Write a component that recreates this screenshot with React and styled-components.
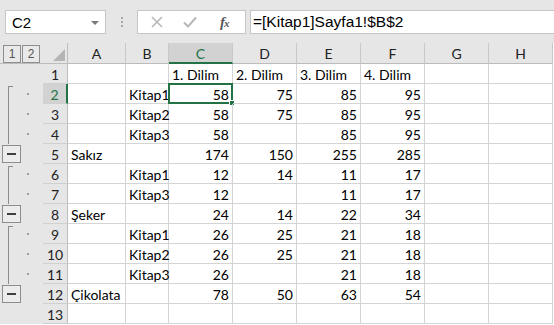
import React from "react";
import styled, { createGlobalStyle, css } from "styled-components";

const GlobalStyle = createGlobalStyle`
  html, body {
    margin: 0;
    padding: 0;
    background: #ffffff;
  }
  * {
    box-sizing: border-box;
  }
`;

const GREEN = "#217346";
const GRID = "#d4d4d4";
const HEAD_BG = "#e6e6e6";
const HEAD_SEL = "#d2d2d2";

const columns = ["A", "B", "C", "D", "E", "F", "G", "H"];

const rows = [
  { n: 1, outline: "none", C: "1. Dilim", D: "2. Dilim", E: "3. Dilim", F: "4. Dilim" },
  { n: 2, outline: "start", B: "Kitap1", C: 58, D: 75, E: 85, F: 95 },
  { n: 3, outline: "line", B: "Kitap2", C: 58, D: 75, E: 85, F: 95 },
  { n: 4, outline: "line", B: "Kitap3", C: 58, E: 85, F: 95 },
  { n: 5, outline: "button", A: "Sakız", C: 174, D: 150, E: 255, F: 285 },
  { n: 6, outline: "start", B: "Kitap1", C: 12, D: 14, E: 11, F: 17 },
  { n: 7, outline: "line", B: "Kitap3", C: 12, E: 11, F: 17 },
  { n: 8, outline: "button", A: "Şeker", C: 24, D: 14, E: 22, F: 34 },
  { n: 9, outline: "start", B: "Kitap1", C: 26, D: 25, E: 21, F: 18 },
  { n: 10, outline: "line", B: "Kitap2", C: 26, D: 25, E: 21, F: 18 },
  { n: 11, outline: "line", B: "Kitap3", C: 26, E: 21, F: 18 },
  { n: 12, outline: "button", A: "Çikolata", C: 78, D: 50, E: 63, F: 54 },
  { n: 13, outline: "none" },
];

function App() {
  return (
    <>
      <GlobalStyle />
      <Window>
        <TopBar>
          <NameBox>
            <NameText>C2</NameText>
            <DropArrow />
          </NameBox>
          <Grip>
            <GripDot />
            <GripDot />
            <GripDot />
          </Grip>
          <FormulaButtons>
            <IconSlot>
              <svg width="14" height="14" viewBox="0 0 14 14">
                <path d="M2 2 L12 12 M12 2 L2 12" stroke="#b8b8b8" strokeWidth="1.6" fill="none" />
              </svg>
            </IconSlot>
            <IconSlot>
              <svg width="16" height="14" viewBox="0 0 16 14">
                <path d="M2 7.5 L6 11.5 L14 2.5" stroke="#b8b8b8" strokeWidth="2" fill="none" />
              </svg>
            </IconSlot>
            <IconSlot>
              <Fx>
                f<FxSub>x</FxSub>
              </Fx>
            </IconSlot>
          </FormulaButtons>
          <FormulaInput>=[Kitap1]Sayfa1!$B$2</FormulaInput>
        </TopBar>

        <Sheet>
          <Gutter $header>
            <LevelButton>1</LevelButton>
            <LevelButton>2</LevelButton>
          </Gutter>
          <Corner>
            <svg width="12" height="12" viewBox="0 0 12 12">
              <polygon points="12,0 12,12 0,12" fill="#b5b5b5" />
            </svg>
          </Corner>
          {columns.map((c) => (
            <ColHead key={c} $selected={c === "C"}>
              {c}
            </ColHead>
          ))}

          {rows.map((r) => (
            <React.Fragment key={r.n}>
              <Gutter $kind={r.outline}>
                {(r.outline === "start" || r.outline === "line") && <OutlineDot />}
                {r.outline === "button" && (
                  <MinusButton>
                    <MinusBar />
                  </MinusButton>
                )}
              </Gutter>
              <RowHead $selected={r.n === 2}>{r.n}</RowHead>
              {columns.map((c) => {
                const v = r[c];
                const isNum = typeof v === "number";
                const active = r.n === 2 && c === "C";
                return (
                  <Cell key={c} $num={isNum}>
                    {v}
                    {active && (
                      <ActiveFrame>
                        <FillHandle />
                      </ActiveFrame>
                    )}
                  </Cell>
                );
              })}
            </React.Fragment>
          ))}
        </Sheet>
      </Window>
    </>
  );
}

export default App;

const Window = styled.div`
  width: 554px;
  height: 325px;
  overflow: hidden;
  display: flex;
  flex-direction: column;
  background: #ffffff;
`;

const TopBar = styled.div`
  height: 43px;
  flex-shrink: 0;
  display: flex;
  align-items: flex-start;
  padding: 10px 0 0 5px;
  background: ${HEAD_BG};
`;

const NameBox = styled.div`
  width: 101px;
  height: 24px;
  background: #ffffff;
  border: 1px solid #c6c6c6;
  display: flex;
  align-items: center;
  justify-content: space-between;
  padding: 0 6px 0 6px;
`;

const NameText = styled.span`
  font-family: "Liberation Sans", Arial, sans-serif;
  font-size: 15px;
  color: #000;
`;

const DropArrow = styled.span`
  width: 0;
  height: 0;
  border-left: 4px solid transparent;
  border-right: 4px solid transparent;
  border-top: 4px solid #7a7a7a;
  margin-top: 1px;
`;

const Grip = styled.div`
  width: 31px;
  height: 24px;
  display: flex;
  flex-direction: column;
  align-items: center;
  justify-content: center;
  gap: 2px;
`;

const GripDot = styled.span`
  width: 2px;
  height: 2px;
  background: #a8a8a8;
`;

const FormulaButtons = styled.div`
  width: 109px;
  height: 24px;
  background: #ffffff;
  border: 1px solid #c6c6c6;
  display: grid;
  grid-template-columns: 1fr 1fr 1fr;
  align-items: center;
  justify-items: center;
  padding: 0 4px 0 2px;
`;

const IconSlot = styled.span`
  display: flex;
  align-items: center;
  justify-content: center;
`;

const Fx = styled.span`
  font-family: "Liberation Serif", "Times New Roman", serif;
  font-style: italic;
  font-size: 15px;
  color: #595959;
  font-weight: bold;
  letter-spacing: -1px;
`;

const FxSub = styled.span`
  font-size: 11px;
`;

const FormulaInput = styled.div`
  flex: 1;
  height: 24px;
  margin-left: 4px;
  background: #ffffff;
  border: 1px solid #c6c6c6;
  border-right: none;
  font-family: "Liberation Sans", Arial, sans-serif;
  font-size: 15.5px;
  line-height: 22px;
  padding-left: 2px;
  color: #000;
  white-space: nowrap;
`;

const Sheet = styled.div`
  display: grid;
  grid-template-columns: 43px 25px 58px 43px repeat(6, 64px);
  grid-template-rows: 21px repeat(13, 20px);
  font-family: Lato, "Open Sans", sans-serif;
  font-size: 14px;
  color: #000;
`;

const headText = css`
  font-family: Lato, "Open Sans", sans-serif;
  font-size: 14px;
  color: #222;
  display: flex;
  align-items: center;
  justify-content: center;
`;

const Gutter = styled.div`
  position: relative;
  background: ${HEAD_BG};
  ${({ $header }) =>
    $header &&
    css`
      display: flex;
      align-items: flex-start;
      gap: 1px;
      padding: 2px 0 0 3px;
      border-bottom: 1px solid #bcbcbc;
    `}
  ${({ $kind }) =>
    ($kind === "start" || $kind === "line") &&
    css`
      &::before {
        content: "";
        position: absolute;
        left: 8px;
        top: ${$kind === "start" ? "2px" : "0"};
        bottom: 0;
        width: 1px;
        background: #8c8c8c;
      }
    `}
  ${({ $kind }) =>
    $kind === "start" &&
    css`
      &::after {
        content: "";
        position: absolute;
        left: 8px;
        top: 2px;
        width: 5px;
        height: 1px;
        background: #8c8c8c;
      }
    `}
`;

const LevelButton = styled.div`
  width: 18px;
  height: 18px;
  border: 1px solid #8e8e8e;
  background: #e9e9e9;
  font-family: "Liberation Sans", Arial, sans-serif;
  font-size: 12px;
  color: #555;
  display: flex;
  align-items: center;
  justify-content: center;
`;

const OutlineDot = styled.span`
  position: absolute;
  left: 27px;
  top: 9px;
  width: 2px;
  height: 2px;
  background: #a0a0a0;
`;

const MinusButton = styled.div`
  position: absolute;
  left: 2px;
  top: 1px;
  width: 19px;
  height: 18px;
  border: 1px solid #8e8e8e;
  background: #ececec;
  display: flex;
  align-items: center;
  justify-content: center;
`;

const MinusBar = styled.span`
  width: 9px;
  height: 2px;
  background: #404040;
`;

const Corner = styled.div`
  background: ${HEAD_BG};
  border-right: 1px solid #bcbcbc;
  border-bottom: 1px solid #bcbcbc;
  display: flex;
  align-items: flex-end;
  justify-content: flex-end;
  padding: 0 2px 2px 0;
`;

const ColHead = styled.div`
  ${headText};
  padding-top: 1px;
  border-right: 1px solid #c8c8c8;
  background: ${({ $selected }) => ($selected ? HEAD_SEL : HEAD_BG)};
  color: ${({ $selected }) => ($selected ? GREEN : "#222")};
  border-bottom: ${({ $selected }) => ($selected ? `2px solid ${GREEN}` : "1px solid #bcbcbc")};
`;

const RowHead = styled.div`
  ${headText};
  background: ${({ $selected }) => ($selected ? HEAD_SEL : HEAD_BG)};
  color: ${({ $selected }) => ($selected ? GREEN : "#222")};
  border-bottom: 1px solid #d0d0d0;
  border-right: ${({ $selected }) => ($selected ? `2px solid ${GREEN}` : "1px solid #bcbcbc")};
  padding-top: 2px;
`;

const Cell = styled.div`
  position: relative;
  border-right: 1px solid ${GRID};
  border-bottom: 1px solid ${GRID};
  line-height: 19px;
  padding: 1px ${({ $num }) => ($num ? "3px" : "2px")} 0 3px;
  text-align: ${({ $num }) => ($num ? "right" : "left")};
  white-space: nowrap;
`;

const ActiveFrame = styled.div`
  position: absolute;
  left: -1px;
  top: -1px;
  right: -1px;
  bottom: -1px;
  border: 2px solid ${GREEN};
  pointer-events: none;
`;

const FillHandle = styled.span`
  position: absolute;
  right: -4px;
  bottom: -4px;
  width: 6px;
  height: 6px;
  background: ${GREEN};
  border: 1px solid #ffffff;
`;
